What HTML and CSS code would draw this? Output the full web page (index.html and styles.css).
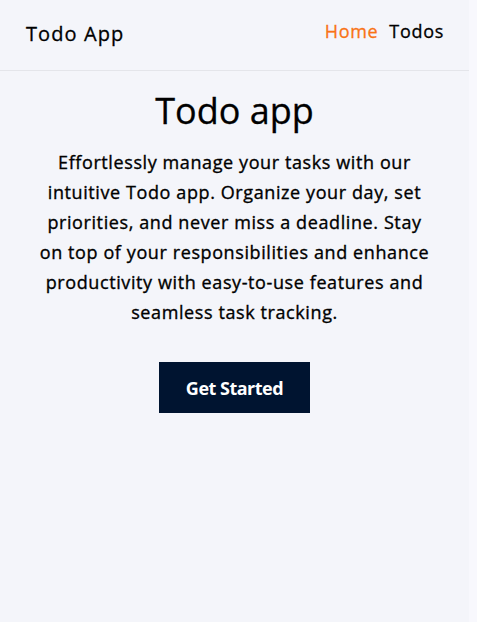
FILE: index.html
```html
<!DOCTYPE html>
<html lang="en">
<head>
<meta charset="utf-8">
<title>Todo App</title>
<link rel="stylesheet" href="styles.css">
</head>
<body>
<div class="page">
  <header class="header">
    <div class="brand">Todo App</div>
    <nav class="nav">
      <a class="nav-link active" href="#">Home</a>
      <a class="nav-link" href="#">Todos</a>
    </nav>
  </header>
  <main class="hero">
    <h1 class="title">Todo app</h1>
    <p class="lead">Effortlessly manage your tasks with our intuitive Todo app. Organize your day, set priorities, and never miss a deadline. Stay on top of your responsibilities and enhance productivity with easy-to-use features and seamless task tracking.</p>
    <button class="cta">Get Started</button>
  </main>
</div>
</body>
</html>
```
FILE: styles.css
```css
html, body {
  margin: 0;
  padding: 0;
}
body {
  background: #f8f8fd;
  font-family: "Open Sans", "Noto Sans", sans-serif;
  color: #000;
}
.page {
  width: 469px;
  min-height: 622px;
  background: #f4f5fa;
}
.header {
  height: 71px;
  border-bottom: 1px solid #e4e5ea;
  display: flex;
  align-items: center;
  justify-content: space-between;
  padding: 0 26px;
  box-sizing: border-box;
}
.brand {
  font-size: 20px;
  font-weight: 500;
  letter-spacing: 1.1px;
  margin-top: -4px;
  -webkit-text-stroke: 0.3px #000;
}
.nav {
  display: flex;
  gap: 11px;
  margin-right: -1px;
  margin-top: -8px;
}
.nav-link {
  font-size: 18px;
  font-weight: 500;
  letter-spacing: 0.7px;
  color: #000;
  text-decoration: none;
  -webkit-text-stroke: 0.3px currentColor;
}
.nav-link.active {
  color: #f97316;
}
.hero {
  display: flex;
  flex-direction: column;
  align-items: center;
  text-align: center;
}
.title {
  margin: 18px 0 0;
  font-size: 36px;
  font-weight: 500;
  line-height: 44px;
  -webkit-text-stroke: 0.3px #000;
}
.lead {
  margin: 14px 0 0;
  width: 397px;
  font-size: 18px;
  line-height: 30px;
  font-weight: 500;
  letter-spacing: 0.6px;
  -webkit-text-stroke: 0.35px #000;
}
.cta {
  margin-top: 35px;
  width: 151px;
  height: 51px;
  border: none;
  background: #001430;
  color: #fff;
  font-family: inherit;
  font-size: 18px;
  font-weight: 700;
  letter-spacing: -0.5px;
  cursor: pointer;
}
```
